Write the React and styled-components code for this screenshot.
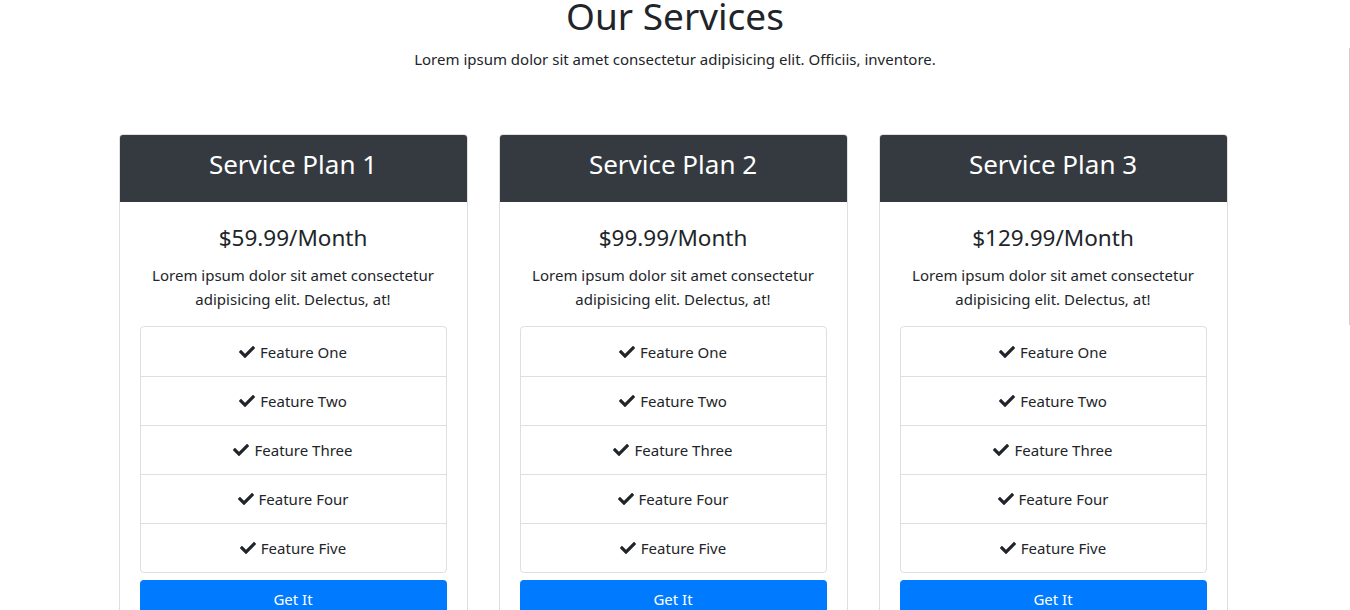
import React from "react";
import styled, { createGlobalStyle } from "styled-components";
import { FaCheck } from "react-icons/fa";

const GlobalStyle = createGlobalStyle`
  body {
    margin: 0;
    background: #fff;
    color: #212529;
    font-family: "Noto Sans", "Open Sans", sans-serif;
    overflow: hidden;
  }
  * { box-sizing: border-box; }
`;

const Page = styled.section`
  padding-bottom: 40px;
`;

const Heading = styled.header`
  text-align: center;
  margin-top: -8px;
`;

const Title = styled.h1`
  margin: 0;
  font-size: 37px;
  font-weight: 400;
  line-height: 48px;
`;

const Lead = styled.p`
  margin: 7px 0 0;
  font-size: 15px;
  line-height: 24px;
`;

const Grid = styled.div`
  display: grid;
  grid-template-columns: repeat(3, 349px);
  gap: 31px;
  justify-content: center;
  margin-top: 63px;
  padding-right: 4px;
`;

const Card = styled.article`
  border: 1px solid rgba(0, 0, 0, 0.125);
  border-radius: 4px;
  overflow: hidden;
  text-align: center;
`;

const CardHeader = styled.div`
  background: #343a40;
  color: #fff;
  height: 67px;
  padding-bottom: 10px;
  display: flex;
  align-items: center;
  justify-content: center;
`;

const PlanName = styled.h2`
  margin: 0;
  font-size: 26px;
  font-weight: 400;
`;

const CardBody = styled.div`
  padding: 20px 20px 20px;
`;

const Price = styled.h3`
  margin: 0 0 9px;
  font-size: 22.5px;
  font-weight: 400;
  line-height: 32px;
`;

const Text = styled.p`
  margin: 0 0 15px;
  font-size: 15px;
  line-height: 24px;
`;

const FeatureList = styled.ul`
  list-style: none;
  margin: 0;
  padding: 0;
  border: 1px solid rgba(0, 0, 0, 0.125);
  border-radius: 4px;
`;

const Feature = styled.li`
  height: 49px;
  display: flex;
  align-items: center;
  justify-content: center;
  gap: 5px;
  font-size: 15px;
  & + & {
    border-top: 1px solid rgba(0, 0, 0, 0.125);
  }
  svg {
    width: 16px;
    height: 16px;
  }
`;

const Button = styled.button`
  display: block;
  width: 100%;
  margin-top: 7px;
  height: 40px;
  padding-bottom: 4px;
  border: none;
  border-radius: 4px;
  background: #007bff;
  color: #fff;
  font-family: inherit;
  font-size: 15px;
  cursor: pointer;
`;

const ScrollTrack = styled.div`
  position: fixed;
  right: 0;
  top: 48px;
  width: 1px;
  height: 277px;
  background: #cfcfcf;
`;

const plans = [
  { name: "Service Plan 1", price: "$59.99" },
  { name: "Service Plan 2", price: "$99.99" },
  { name: "Service Plan 3", price: "$129.99" },
];

const features = ["One", "Two", "Three", "Four", "Five"];

export default function App() {
  return (
    <>
      <GlobalStyle />
      <Page>
        <Heading>
          <Title>Our Services</Title>
          <Lead>
            Lorem ipsum dolor sit amet consectetur adipisicing elit. Officiis, inventore.
          </Lead>
        </Heading>
        <Grid>
          {plans.map((plan) => (
            <Card key={plan.name}>
              <CardHeader>
                <PlanName>{plan.name}</PlanName>
              </CardHeader>
              <CardBody>
                <Price>{plan.price}/Month</Price>
                <Text>
                  Lorem ipsum dolor sit amet consectetur adipisicing elit. Delectus, at!
                </Text>
                <FeatureList>
                  {features.map((f) => (
                    <Feature key={f}>
                      <FaCheck />
                      Feature {f}
                    </Feature>
                  ))}
                </FeatureList>
                <Button>Get It</Button>
              </CardBody>
            </Card>
          ))}
        </Grid>
      </Page>
      <ScrollTrack />
    </>
  );
}
